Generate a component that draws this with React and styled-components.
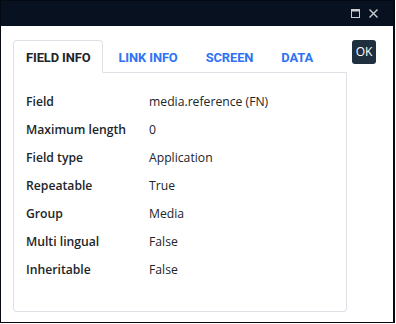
import React from "react";
import styled, { createGlobalStyle } from "styled-components";

const Global = createGlobalStyle`
  html, body { margin: 0; padding: 0; background: #fff; }
  body { width: 396px; height: 324px; overflow: hidden; }
  * { box-sizing: border-box; }
`;

const Window = styled.div`
  width: 395px;
  height: 323px;
  border: 1px solid #050a12;
  border-right-width: 2px;
  display: flex;
  flex-direction: column;
  background: #fff;
  font-family: "Open Sans", "Noto Sans", sans-serif;
`;

const TitleBar = styled.div`
  height: 25px;
  background: #08111f;
  display: flex;
  align-items: center;
  justify-content: flex-end;
  gap: 9px;
  padding-right: 15px;
`;

const IconButton = styled.span`
  display: flex;
  width: 9px;
  height: 9px;
  color: #c9ccd1;
`;

const Body = styled.div`
  flex: 1;
  display: flex;
  align-items: flex-start;
  gap: 5px;
  padding: 14px 0 10px 12px;
`;

const Panel = styled.div`
  width: 334px;
  height: 272px;
  display: flex;
  flex-direction: column;
`;

const TabBar = styled.div`
  display: flex;
  height: 33px;
  border-bottom: 1px solid #dee2e6;
`;

const Tab = styled.div`
  height: 33px;
  margin-bottom: -1px;
  margin-right: 2px;
  padding: 1px 12px 0;
  display: flex;
  align-items: center;
  border: 1px solid ${(p) => (p.$active ? "#dee2e6" : "transparent")};
  border-bottom-color: ${(p) => (p.$active ? "#fff" : "transparent")};
  border-radius: 4px 4px 0 0;
  background: ${(p) => (p.$active ? "#fff" : "transparent")};
  color: ${(p) => (p.$active ? "#212529" : "#2f72f5")};
  font-family: Roboto, "Liberation Sans", sans-serif;
  font-weight: 700;
  font-size: 12.9px;
  letter-spacing: -0.1px;
`;

const Content = styled.div`
  flex: 1;
  border: 1px solid #dee2e6;
  border-top: none;
  border-radius: 0 0 4px 4px;
  padding: 15px 12px 10px;
`;

const Row = styled.div`
  display: grid;
  grid-template-columns: 123px 1fr;
  height: 28px;
  line-height: 28px;
  font-size: 12.2px;
  color: #212529;
`;

const Label = styled.div`
  font-weight: 600;
`;

const Value = styled.div`
  font-weight: 400;
`;

const OkButton = styled.button`
  width: 24px;
  height: 24px;
  padding: 0;
  border: none;
  border-radius: 3px;
  background: #1f2f3d;
  color: #fff;
  font-family: "Open Sans", sans-serif;
  font-size: 12px;
  line-height: 24px;
`;

const rows = [
  ["Field", "media.reference (FN)"],
  ["Maximum length", "0"],
  ["Field type", "Application"],
  ["Repeatable", "True"],
  ["Group", "Media"],
  ["Multi lingual", "False"],
  ["Inheritable", "False"],
];

const tabs = ["FIELD INFO", "LINK INFO", "SCREEN", "DATA"];

export default function App() {
  return (
    <>
      <Global />
      <Window>
        <TitleBar>
          <IconButton>
            <svg width="9" height="9" viewBox="0 0 9 9">
              <rect x="0.5" y="0.5" width="8" height="8" fill="none" stroke="currentColor" />
              <rect x="0" y="0" width="9" height="2.5" fill="currentColor" />
            </svg>
          </IconButton>
          <IconButton>
            <svg width="9" height="9" viewBox="0 0 9 9">
              <path d="M0.5 0.5 L8.5 8.5 M8.5 0.5 L0.5 8.5" stroke="currentColor" strokeWidth="1.4" />
            </svg>
          </IconButton>
        </TitleBar>
        <Body>
          <Panel>
            <TabBar>
              {tabs.map((t, i) => (
                <Tab key={t} $active={i === 0}>
                  {t}
                </Tab>
              ))}
            </TabBar>
            <Content>
              {rows.map(([l, v]) => (
                <Row key={l}>
                  <Label>{l}</Label>
                  <Value>{v}</Value>
                </Row>
              ))}
            </Content>
          </Panel>
          <OkButton>OK</OkButton>
        </Body>
      </Window>
    </>
  );
}
